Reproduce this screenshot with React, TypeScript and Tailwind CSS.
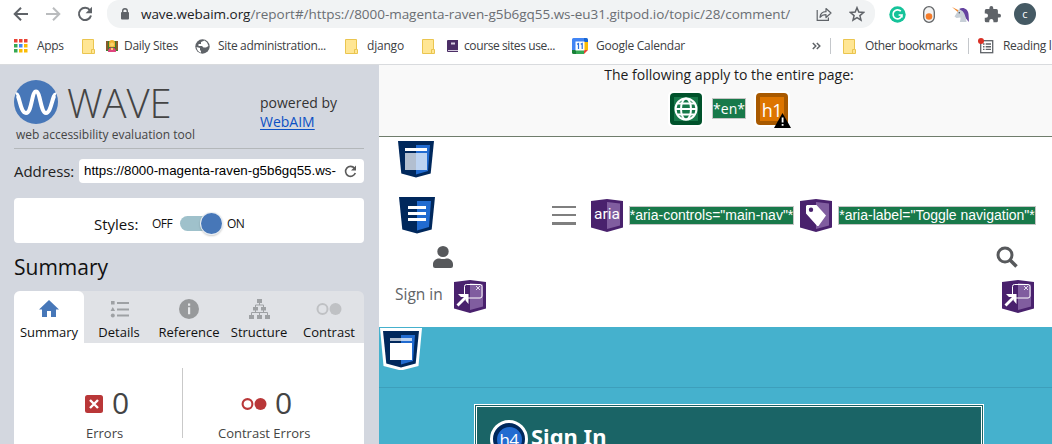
import React from "react";

const SANS = "font-['Open_Sans','Noto_Sans',sans-serif]";

function Folder() {
  return (
    <svg width="13" height="15" viewBox="0 0 13 15">
      <path d="M.5.5h11v10h1v4H.5z" fill="#ffe694" stroke="#eac54f" />
      <path d="M9.5 14v-3.5h2" fill="none" stroke="#eac54f" />
    </svg>
  );
}

function Mark({ className, label }: { className: string; label: string }) {
  return (
    <span className={`shrink-0 whitespace-nowrap text-[12px] leading-4 text-[#3c4043] ${className}`}>{label}</span>
  );
}

function Toolbar() {
  return (
    <div className="flex h-7 items-center">
      <div className="flex w-[107px] items-center gap-[16px] pl-[13px]">
        <svg width="16" height="16" viewBox="0 0 16 16" fill="none" stroke="#5f6368" strokeWidth="2">
          <path d="M15 8H2.5M8 1.7 1.7 8 8 14.3" />
        </svg>
        <svg width="16" height="16" viewBox="0 0 16 16" fill="none" stroke="#babcbe" strokeWidth="2">
          <path d="M1 8h12.500M8 1.700 14.300 8 8 14.300" />
        </svg>
        <svg width="16" height="16" viewBox="0 0 16 16">
          <path d="M13 4.300A6.100 6.100 0 1 0 14 9.500" fill="none" stroke="#5f6368" strokeWidth="2" />
          <path d="M15 .800v6.400H8.600z" fill="#5f6368" />
        </svg>
      </div>
      <div className="flex h-7 w-[768px] items-center rounded-b-[14px] rounded-tl-[12px] rounded-tr-[12px] bg-[#f1f3f4] pl-[13px] pr-[10px]">
        <svg width="10" height="12" viewBox="0 0 10 12" className="mr-[11px]">
          <rect x="1" y="4" width="8" height="7.500" rx="1" fill="#5f6368" />
          <path d="M2.700 5V3a2.300 2.300 0 0 1 4.600 0v2" fill="none" stroke="#5f6368" strokeWidth="1.400" />
        </svg>
        <span className="w-[676px] whitespace-nowrap text-[13.5px] leading-5 tracking-[-0.042px] text-[#6a6e73]">
          <span className="text-[#202124]">wave.webaim.org</span>
          /report#/https://8000-magenta-raven-g5b6gq55.ws-eu31.gitpod.io/topic/28/comment/
        </span>
        <svg width="16" height="16" viewBox="0 0 16 16" fill="none" stroke="#5f6368" strokeWidth="1.200" className="mr-[17px] shrink-0">
          <path d="M1.200 4v10.300h11.200V11.500" />
          <path d="M4 11.300c.3-3.600 2.500-5.500 6-5.600V2.500l5 4.500-5 4.500V8.600C7.500 8.600 5.500 9.400 4 11.300z" strokeLinejoin="round" />
        </svg>
        <svg width="16" height="16" viewBox="0 0 16 16" fill="none" stroke="#5f6368" strokeWidth="1.500" className="shrink-0">
          <path d="M8 1.700l1.800 4.400 4.700.4-3.600 3.100 1.100 4.600L8 11.700l-4 2.500 1.100-4.600L1.500 6.500l4.700-.4z" />
        </svg>
      </div>
      <svg width="17" height="17" viewBox="0 0 17 17" className="ml-[14px]">
        <circle cx="8.500" cy="8.500" r="8.200" fill="#15c39a" />
        <path d="M11.800 5.200A4.500 4.500 0 1 0 13 9H9.600M12.900 9v2.600" fill="none" stroke="#fff" strokeWidth="1.700" />
      </svg>
      <svg width="12" height="17" viewBox="0 0 12 17" className="ml-[17px]">
        <rect x=".700" y=".700" width="10.600" height="15.600" rx="5.300" fill="#f3f3f3" stroke="#616467" strokeWidth="1.300" />
        <circle cx="6" cy="10.500" r="3.300" fill="#f57c2a" />
      </svg>
      <svg width="18" height="17" viewBox="0 0 18 17" className="ml-[17px]">
        <path d="M0 1l7 3.500-1 1.800z" fill="#f28a30" />
        <path d="M7 3.200C11 .500 16 3 16.500 8c.2 2.500.5 5 .3 8l-4-5-3-5.500z" fill="#64429f" />
        <path d="M7.500 2l.8 2C12 5 13.500 9 14.500 16H7.800c.7-2 .8-3.500.7-4.500L4.500 12 2.500 10.500 6 5z" fill="#c7cfd7" />
        <circle cx="7.300" cy="6.800" r=".700" fill="#444" />
      </svg>
      <svg width="17" height="17" viewBox="1 1 22 22" className="ml-[14px]">
        <path fill="#5f6368" d="M20.500 11H19V7a2 2 0 0 0-2-2h-4V3.500a2.500 2.500 0 0 0-5 0V5H4a2 2 0 0 0-2 2v3.800h1.500a2.700 2.700 0 0 1 0 5.400H2V20a2 2 0 0 0 2 2h3.800v-1.500a2.700 2.700 0 0 1 5.400 0V22H17a2 2 0 0 0 2-2v-4h1.500a2.500 2.500 0 0 0 0-5z" />
      </svg>
      <div className="ml-[13px] flex size-[22px] items-center justify-center rounded-full bg-[#455a64] pb-[2px] text-[11px] leading-none text-white">c</div>
    </div>
  );
}

const APP_COLORS = ["#ea4335", "#ea4335", "#ea4335", "#34a853", "#4285f4", "#fbbc04", "#34a853", "#fbbc04", "#fbbc04"];

function Bookmarks() {
  return (
    <div className="flex h-9 items-center overflow-hidden">
      <svg width="14" height="14" viewBox="0 0 14 14" className="ml-[14px] shrink-0">
        {APP_COLORS.map((c, i) => (
          <rect key={i} x={(i % 3) * 5} y={Math.floor(i / 3) * 5} width="3.500" height="3.500" fill={c} />
        ))}
      </svg>
      <Mark label="Apps" className="ml-[9px] w-[45px] tracking-[-0.3px]" />
      <span className="w-6 shrink-0"><Folder /></span>
      <svg width="12" height="13" viewBox="0 0 12 13" className="shrink-0">
        <rect width="12" height="10" y="1" fill="#3f7d2e" />
        <path d="M0 1h2v9H0zM10 1h2v9h-2z" fill="#8a5a2b" />
        <path d="M3 6V3a3 3 0 0 1 6 0v4H3z" fill="#f2b233" />
        <circle cx="6" cy="4.500" r="2" fill="#fbd36b" />
        <path d="M2 12c0-3 1-4.500 4-4.500s4 1.500 4 4.500z" fill="#e0457f" />
        <path d="M5 8h2v2H5z" fill="#fbd36b" />
      </svg>
      <Mark label="Daily Sites" className="ml-[6px] w-[71px] tracking-[-0.28px]" />
      <svg width="15" height="15" viewBox="0 0 15 15" className="shrink-0">
        <circle cx="7.500" cy="7.500" r="7.200" fill="#5f6368" />
        <path d="M9.500 1.500 6 3v2H3.500v2H7l1.500 1.500H11L13.500 7 12 3.500zM1.500 8 5 9v2l1 1v1.700C3.500 13 1.800 11 1.500 8z" fill="#fff" />
      </svg>
      <Mark label="Site administration..." className="ml-[8px] w-[127px] tracking-[-0.33px]" />
      <span className="w-[22px] shrink-0"><Folder /></span>
      <Mark label="django" className="w-[55px] tracking-[-0.2px]" />
      <span className="w-[25px] shrink-0"><Folder /></span>
      <svg width="11" height="12" viewBox="0 0 11 12" className="shrink-0">
        <path d="M1 0h10v12H1a1 1 0 0 1-1-1V1a1 1 0 0 1 1-1z" fill="#4b2e66" />
        <path d="M4 2.500h4v2H4z" fill="#d7cde0" />
        <path d="M1 10h10v1H1z" fill="#d7cde0" />
      </svg>
      <Mark label="course sites use..." className="ml-[6px] w-[108px] tracking-[-0.4px]" />
      <svg width="16" height="16" viewBox="0 0 16 16" className="shrink-0">
        <path d="M1.500 0H12v4H4v8H0V1.500A1.500 1.500 0 0 1 1.500 0z" fill="#4285f4" />
        <path d="M12 0h2.500A1.500 1.500 0 0 1 16 1.500V4h-4z" fill="#1967d2" />
        <path d="M12 4h4v8h-4z" fill="#fbbc04" />
        <path d="M4 12h8v4H4z" fill="#34a853" />
        <path d="M0 12h4v4H1.500A1.500 1.500 0 0 1 0 14.500z" fill="#188038" />
        <path d="M12 12h4l-4 4z" fill="#ea4335" />
        <path d="M3.500 3.500h9v9h-9z" fill="#fff" />
        <path d="M5 6.300l1.500-.8V11M8.700 6.300l1.500-.8V11" fill="none" stroke="#2b6fdc" strokeWidth="1.200" />
      </svg>
      <Mark label="Google Calendar" className="ml-[8px] w-[216px] tracking-[-0.26px]" />
      <svg width="9" height="8" viewBox="0 0 9 8" fill="none" stroke="#5f6368" strokeWidth="1.500" className="shrink-0">
        <path d="M.800 1l3 3-3 3M4.800 1l3 3-3 3" />
      </svg>
      <div className="ml-[9px] h-4 w-px shrink-0 bg-[#c4c7cb]" />
      <span className="ml-[12px] w-[22px] shrink-0"><Folder /></span>
      <Mark label="Other bookmarks" className="w-[103px] tracking-[-0.42px]" />
      <div className="h-4 w-px shrink-0 bg-[#c4c7cb]" />
      <svg width="16" height="16" viewBox="0 0 16 16" className="ml-[9px] shrink-0">
        <rect x="2.700" y="2.700" width="12" height="12" fill="#fff" stroke="#5f6368" strokeWidth="1.300" />
        <path d="M5 6h1.500M5 8.700h1.500M5 11.400h1.500M7.700 6H13M7.700 8.700H13M7.700 11.400H13" stroke="#5f6368" strokeWidth="1.400" />
        <circle cx="3" cy="3" r="3" fill="#d93025" />
      </svg>
      <Mark label="Reading list" className="ml-[9px] tracking-[-0.3px]" />
    </div>
  );
}

function Tab({ label, active, children }: { label: string; active?: boolean; children: React.ReactNode }) {
  return (
    <div className={`flex w-[70px] flex-col items-center ${active ? "rounded-t-md bg-white" : ""}`}>
      <div className="flex h-[31px] items-center pt-[5px]">{children}</div>
      <span className="whitespace-nowrap text-[13px] leading-5 text-[#111]">{label}</span>
    </div>
  );
}

function Sidebar() {
  return (
    <aside className="flex h-[379px] w-[379px] shrink-0 flex-col overflow-hidden bg-[#d3d7df] px-[14px] pr-[15px] *:shrink-0">
      <div className="flex h-[84px] justify-between border-b border-[#b3b7ba]">
        <div>
          <div className="flex h-[59px] items-end">
            <svg width="44" height="44" viewBox="0 0 44 44">
              <circle cx="22" cy="22" r="22" fill="#4777b8" />
              <path d="M2 14.500C5.500 13 6 33 12 33S17.500 11.500 22 11.500 26.500 33 32 33 38.500 13 42 14.500" fill="none" stroke="#fff" strokeWidth="4" />
            </svg>
            <span className="ml-[9px] mb-[-1px] text-[40px] leading-[44px] font-light tracking-[-0.1px] text-[#444]">WAVE</span>
          </div>
          <div className="pl-[2px] pt-[3px] text-[12px] leading-4 text-[#444]">web accessibility evaluation tool</div>
        </div>
        <div className="w-[104px] pt-[28px] text-[14px] leading-[19px] text-[#333]">
          <div>powered by</div>
          <a className="text-[#0b50c4] underline underline-offset-2">WebAIM</a>
        </div>
      </div>
      <div className="mt-[10px] flex h-6 items-center">
        <span className="w-[65px] pb-px text-[15px] leading-5 tracking-[-0.05px] text-[#222]">Address:</span>
        <div className="flex h-6 w-[285px] items-center rounded bg-white pl-[5px]">
          <span className="w-[260px] whitespace-nowrap font-['Liberation_Sans',Arial,sans-serif] text-[13.33px] text-black">https://8000-magenta-raven-g5b6gq55.ws-</span>
          <svg width="13" height="13" viewBox="0 0 13 13">
            <path d="M10.500 3.300A5 5 0 1 0 11.300 8" fill="none" stroke="#5b5b5b" strokeWidth="1.600" />
            <path d="M12 .500v5H7z" fill="#5b5b5b" />
          </svg>
        </div>
      </div>
      <div className="mt-[15px] flex h-[45px] items-center rounded bg-white pt-[6px] text-[#111]">
        <span className="w-[138px] pl-[80px] text-[15px] leading-5">Styles:</span>
        <span className="w-[28px] text-[12px] leading-5 tracking-[-0.5px]">OFF</span>
        <div className="flex h-[15px] w-[42px] items-center justify-end rounded-full bg-gradient-to-r from-[#9fc1cb] from-80% to-white to-80%">
          <div className="size-[21px] shrink-0 rounded-full bg-[#4777b8] shadow-[0_0_0_1px_#e9eef3,0_1px_2px_1px_rgba(0,0,0,0.2)]" />
        </div>
        <span className="pl-[5px] text-[12px] leading-5 tracking-[-0.5px]">ON</span>
      </div>
      <h2 className="mt-[9px] h-[39px] text-[21px] leading-[30px] text-[#111]">Summary</h2>
      <div className="flex h-[52px] rounded-t-md bg-[#e0e2e6]">
        <Tab label="Summary" active>
          <svg width="20" height="18" viewBox="0 0 20 18"><path d="M10 0 20 9.500h-3V17h-5v-6H8v6H3V9.500H0z" fill="#4777b8" /></svg>
        </Tab>
        <Tab label="Details">
          <svg width="19" height="17" viewBox="0 0 19 17" fill="#9ea1a4">
            <path d="M1 0h3.600v3.600H1zM2.800 6l2.300 4H.500zM7 1h12v2H7zM7 7.500h12v2H7zM7 13.500h12v2H7z" /><circle cx="2.800" cy="14.500" r="2" />
          </svg>
        </Tab>
        <Tab label="Reference">
          <svg width="20" height="20" viewBox="0 0 20 20">
            <circle cx="10" cy="10" r="10" fill="#97999b" /><path d="M9 4.500h2.200v2.200H9zM9 8.200h2.200v7H9z" fill="#e8e9eb" />
          </svg>
        </Tab>
        <Tab label="Structure">
          <svg width="21" height="20" viewBox="0 0 21 20" fill="#9ea1a4">
            <path d="M8 0h5v4H8zM4 8h5v3.500H4zM12 8h5v3.500h-5zM0 16h5v4H0zM8 16h5v4H8zM16 16h5v4h-5z" />
            <path d="M10.500 3v3M6.500 8V6h8v2M6.500 11v2.500M14.500 11v2.500M2.500 16v-2.500h16V16M10.500 13.500V16" fill="none" stroke="#9ea1a4" />
          </svg>
        </Tab>
        <Tab label="Contrast">
          <svg width="26" height="14" viewBox="0 0 26 14"><circle cx="6.500" cy="7" r="5" fill="none" stroke="#bfc1c4" strokeWidth="2" /><circle cx="19.500" cy="7" r="6" fill="#bfc1c4" /></svg>
        </Tab>
      </div>
      <div className="flex h-[110px] bg-white pt-[25px] text-[#444]">
        <div className="h-[70px] w-[169px] border-r border-[#c9c9c9]">
          <div className="flex h-[70px] items-center pl-[71px] pt-[2px]">
            <svg width="18" height="18" viewBox="0 0 18 18" className="shrink-0">
              <rect width="18" height="18" rx="2.500" fill="#b93738" /><path d="M5 5l8 8M13 5l-8 8" stroke="#fff" strokeWidth="2.400" />
            </svg>
            <span className="ml-[9px] pb-[3px] text-[30px] leading-[30px]">0</span>
          </div>
          <div className="mt-[-15px] pl-[72px] text-[13px] leading-5">Errors</div>
        </div>
        <div>
          <div className="flex h-[70px] items-center pl-[58px] pt-[2px]">
            <svg width="26" height="14" viewBox="0 0 26 14"><circle cx="6.500" cy="7" r="4.900" fill="none" stroke="#b93738" strokeWidth="2.100" /><circle cx="19.500" cy="7" r="6" fill="#b93738" /></svg>
            <span className="ml-[8px] pb-[3px] text-[30px] leading-[30px]">0</span>
          </div>
          <div className="mt-[-15px] pl-[35px] text-[13px] leading-5">Contrast Errors</div>
        </div>
      </div>
    </aside>
  );
}

function Shield({ kind }: { kind: "header" | "nav" | "main" }) {
  return (
    <>
      <path d="M0 0h36l-3.300 32.500L18 36.500 3.300 32.500z" fill="#00285c" />
      <path d="M18 4h14l-2 26-12 3.500z" fill="#216bd0" />
      {kind === "header" && <><path d="M7 7h22v3H7z" fill="#fff" /><path d="M7 12h11v17H7z" fill="#b2bfd0" /><path d="M18 12h11v17H18z" fill="#bcd3f1" /></>}
      {kind === "nav" && <path d="M9 9h18v3H9zM9 15h18v3H9zM9 21h18v3H9z" fill="#fff" />}
      {kind === "main" && <><path d="M7 7h11v3H7z" fill="#b2bfd0" /><path d="M18 7h11v3H18z" fill="#bcd3f1" /><path d="M7 12h22v17H7z" fill="#fff" /></>}
    </>
  );
}

function AriaBadge({ className = "", children }: { className?: string; children: React.ReactNode }) {
  return (
    <svg width="32" height="33" viewBox="0 0 32 33" className={`shrink-0 ${className}`}>
      <path d="M0 2 16 0l16 2v26.500L16 33 0 28.500z" fill="#49216d" />
      <path d="M16 3l13 1.500v22L16 30z" fill="#805d9f" />
      {children}
    </svg>
  );
}

function Popup() {
  return (
    <>
      <rect x="10.500" y="4.500" width="17.500" height="13.500" rx="2" fill="none" stroke="#fff" />
      <path d="M22 6l4 4M26 6l-4 4" stroke="#e5dcec" />
      <path d="M3.500 25.500 12 17" stroke="#fff" strokeWidth="2.800" />
      <path d="M4 14h10.500v10l-3-3.500V17H7z" fill="#fff" />
    </>
  );
}

function Tag({ label, className }: { label: string; className: string }) {
  return (
    <span className={`flex shrink-0 items-center justify-center whitespace-nowrap border border-[#c5c5c5] bg-[#18794a] text-white ${className}`}>{label}</span>
  );
}

function Page() {
  return (
    <main className="flex h-[379px] min-w-0 flex-1 flex-col overflow-hidden bg-white">
      <section className="flex h-[72px] shrink-0 flex-col border-b border-[#6f7d6c] bg-[#f9f9f9]">
        <div className="h-[26px] pl-[27px] text-center text-[14px] leading-[20px] text-[#1c1c1c]">The following apply to the entire page:</div>
        <div className="flex h-9 items-center pl-[289px]">
          <svg width="36" height="36" viewBox="-2 -2 36 36">
            <rect x="-2" y="-2" width="36" height="36" rx="5" fill="#fff" />
            <rect width="32" height="32" rx="4" fill="#00522b" />
            <rect x="4" y="4" width="24" height="24" fill="#18794a" />
            <g fill="none" stroke="#fff" strokeWidth="2">
              <circle cx="16" cy="16" r="10.500" /><ellipse cx="16" cy="16" rx="5" ry="10.500" /><path d="M6 16h20M7.500 10.500h17M7.500 21.500h17" />
            </g>
          </svg>
          <Tag label="*en*" className="mb-[2px] ml-[8px] h-[21px] w-[34px] text-[14px]" />
          <div className="relative ml-[8px] size-9 shrink-0 rounded-[5px] bg-white p-[2px]">
            <div className="flex size-8 items-center justify-center rounded border-4 border-[#a85900] bg-[#dd7500] pt-px text-[18px] leading-none text-white">
              <span className="tracking-[-0.5px]">h1</span>
            </div>
            <svg width="17" height="15" viewBox="0 0 17 15" className="absolute left-[20px] top-[22px]">
              <path d="M8.500 0 17 15H0z" fill="#000" /><path d="M7.700 4.500h1.800v5H7.700zM7.700 11h1.800v1.800H7.700z" fill="#fff" />
            </svg>
          </div>
        </div>
      </section>
      <div className="h-[56px] shrink-0 pl-[19px] pt-[4px]">
        <svg width="36" height="37" viewBox="0 0 36 37"><Shield kind="header" /></svg>
      </div>
      <div className="flex h-[45px] shrink-0 items-center pl-[20px]">
        <svg width="36" height="37" viewBox="0 0 36 37" className="shrink-0"><Shield kind="nav" /></svg>
        <svg width="24" height="19" viewBox="0 0 24 19" className="ml-[117px] shrink-0" fill="#7f7f7f"><path d="M0 0h24v2H0zM0 8h24v2H0zM0 16h24v3H0z" /></svg>
        <AriaBadge className="ml-[15px]"><text x="16" y="20" textAnchor="middle" fill="#fff" fontSize="15.500" fontFamily="Roboto, sans-serif">aria</text></AriaBadge>
        <Tag label={'*aria-controls="main-nav"*'} className="ml-[6px] h-[19px] w-[165px] font-['Liberation_Sans',Arial,sans-serif] text-[14px]" />
        <AriaBadge className="ml-[6px]">
          <path fillRule="evenodd" d="M7 6h9.500L26 16.500 18.500 27h-1.300L6 14.500V7zM11 8.500a2.200 2.200 0 1 0 .01 4.400 2.200 2.200 0 0 0-.01-4.400z" fill="#fff" />
        </AriaBadge>
        <Tag label={'*aria-label="Toggle navigation"*'} className="ml-[6px] h-[19px] w-[198px] font-['Liberation_Sans',Arial,sans-serif] text-[14px]" />
      </div>
      <div className="flex h-[36px] shrink-0 items-center justify-between pl-[54px] pr-[34px] pt-[2px]">
        <svg width="20" height="22" viewBox="0 0 448 512" preserveAspectRatio="none" fill="#57595c"><path d="M224 256a128 128 0 1 0 0-256 128 128 0 0 0 0 256zm89.600 32h-16.700a174 174 0 0 1-145.800 0h-16.700C60.200 288 0 348.200 0 422.400V464a48 48 0 0 0 48 48h352a48 48 0 0 0 48-48v-41.600c0-74.200-60.200-134.400-134.400-134.400z" /></svg>
        <svg width="22" height="22" viewBox="0 0 22 22" fill="none" stroke="#57595c"><circle cx="9" cy="9" r="7" strokeWidth="3" /><path d="M14 14l6.500 6.500" strokeWidth="3.600" /></svg>
      </div>
      <div className="flex h-[53px] shrink-0 items-start pl-[16px] pr-[18px] pt-[6px]">
        <span className="w-[59px] pt-[4px] text-[15.5px] leading-5 text-[#616467]">Sign in</span>
        <AriaBadge><Popup /></AriaBadge>
        <AriaBadge className="ml-auto"><Popup /></AriaBadge>
      </div>
      <section className="flex h-[117px] shrink-0 flex-col overflow-hidden bg-[#45b1cd]">
        <div className="h-[61px] shrink-0 border-b border-[#3d9fbb] pl-[1px] pt-px">
          <svg width="42" height="42" viewBox="-3 -3 42 42">
            <path d="M-3-3h42l-3.500 38L18 39.500.5 35z" fill="#fff" /><Shield kind="main" />
          </svg>
        </div>
        <div className="ml-[95px] mt-[16px] flex h-[60px] w-[510px] shrink-0 overflow-hidden border-[3px] border-double border-white bg-[#1a6466] pl-[13px] pt-[13px]">
          <div className="flex size-[38px] items-center justify-center rounded-full border-[3px] border-white bg-[#00285c]">
            <div className="flex size-[25px] items-center justify-center rounded-full bg-[#216bd0] text-[17px] leading-none tracking-[-0.5px] text-white">h4</div>
          </div>
          <span className="ml-[3px] mt-[1px] font-['Noto_Sans',sans-serif] text-[22px] leading-[30px] font-bold text-white">Sign In</span>
        </div>
      </section>
    </main>
  );
}

export default function App() {
  return (
    <div className={`h-[444px] w-[1052px] overflow-hidden bg-white ${SANS}`}>
      <header className="h-[65px] border-b border-[#d9dbde]">
        <Toolbar />
        <Bookmarks />
      </header>
      <div className="flex">
        <Sidebar />
        <Page />
      </div>
    </div>
  );
}
